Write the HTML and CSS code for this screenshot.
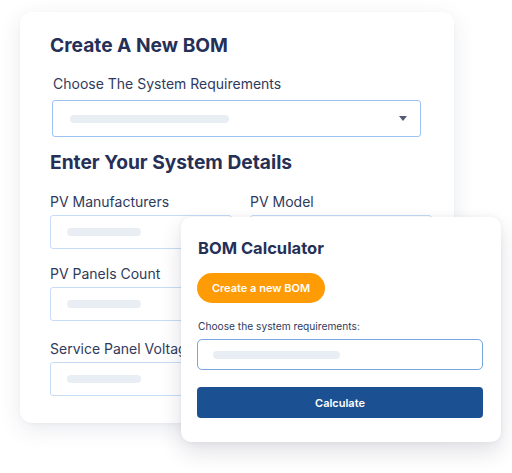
FILE: index.html
```html
<!DOCTYPE html>
<html>
<head>
<meta charset="utf-8">
<link rel="stylesheet" href="styles.css">
</head>
<body>
<div class="stage">
  <div class="card back">
    <h1 class="title">Create A New BOM</h1>
    <div class="label sel-label">Choose The System Requirements</div>
    <div class="select">
      <span class="ph ph-select"></span>
      <span class="arrow"></span>
    </div>
    <h2 class="title sub">Enter Your System Details</h2>
    <div class="grid">
      <div class="field">
        <div class="label">PV Manufacturers</div>
        <div class="input"><span class="ph"></span></div>
      </div>
      <div class="field">
        <div class="label">PV Model</div>
        <div class="input"><span class="ph"></span></div>
      </div>
      <div class="field">
        <div class="label">PV Panels Count</div>
        <div class="input"><span class="ph"></span></div>
      </div>
      <div class="field">
        <div class="label">Inverter Type</div>
        <div class="input"><span class="ph"></span></div>
      </div>
      <div class="field last">
        <div class="label">Service Panel Voltage</div>
        <div class="input"><span class="ph"></span></div>
      </div>
      <div class="field last">
        <div class="label">Main Breaker</div>
        <div class="input"><span class="ph"></span></div>
      </div>
    </div>
  </div>
  <div class="card front">
    <h3 class="ftitle">BOM Calculator</h3>
    <button class="btn-orange">Create a new BOM</button>
    <div class="flabel">Choose the system requirements:</div>
    <div class="finput"><span class="ph ph-front"></span></div>
    <button class="btn-blue">Calculate</button>
  </div>
</div>
</body>
</html>
```
FILE: styles.css
```css
* { box-sizing: border-box; margin: 0; padding: 0; }
html, body { background: #ffffff; }
body {
  font-family: Inter, "Noto Sans", "Liberation Sans", sans-serif;
  color: #2b3556;
  width: 512px;
  height: 473px;
  overflow: hidden;
}
.stage {
  position: relative;
  width: 512px;
  height: 473px;
  padding: 12px 0 0 20px;
}
.card {
  background: #ffffff;
  border-radius: 12px;
}
.back {
  width: 434px;
  height: 411px;
  padding: 21px 0 0 30px;
  box-shadow: 0 6px 22px rgba(40, 50, 90, 0.10), 0 1px 3px rgba(40, 50, 90, 0.04);
}
.title {
  font-size: 19.2px;
  line-height: 24px;
  font-weight: 700;
  color: #263056;
}
.label {
  font-size: 14px;
  line-height: 18px;
  font-weight: 400;
  color: #2f3a5c;
}
.sel-label {
  margin: 18px 0 0 3px;
}
.select {
  margin: 7px 0 0 2px;
  width: 369px;
  height: 37px;
  border: 1px solid #9cc3f3;
  border-radius: 3px;
  display: flex;
  align-items: center;
  justify-content: space-between;
  padding: 0 13px 0 17px;
}
.ph {
  display: block;
  height: 8px;
  width: 74px;
  border-radius: 4px;
  background: #e9edf4;
}
.ph-select { width: 159px; }
.arrow {
  width: 0;
  height: 0;
  border-left: 4.5px solid transparent;
  border-right: 4.5px solid transparent;
  border-top: 5px solid #545b78;
}
.sub { margin-top: 13px; }
.grid {
  margin-top: 19px;
  display: grid;
  grid-template-columns: 182px 182px;
  column-gap: 18px;
  row-gap: 16px;
}
.field.last { margin-top: 3px; }
.field .input {
  margin-top: 4px;
  height: 34px;
  border: 1px solid #c6dcf6;
  border-radius: 3px;
  display: flex;
  align-items: center;
  padding-left: 16px;
}
.front {
  position: absolute;
  left: 181px;
  top: 217px;
  width: 320px;
  height: 225px;
  border-radius: 10px;
  padding: 21px 17px 0 16px;
  display: flex;
  flex-direction: column;
  align-items: flex-start;
  box-shadow: 0 10px 22px rgba(40, 45, 80, 0.14), 0 0 6px rgba(40, 45, 80, 0.05);
}
.ftitle {
  font-size: 16.5px;
  line-height: 20px;
  font-weight: 700;
  color: #263056;
  margin-left: 1px;
}
.btn-orange {
  margin-top: 15px;
  width: 128px;
  height: 30px;
  border: none;
  border-radius: 15px;
  background: #ff9b05;
  color: #ffffff;
  font-family: Inter, "Noto Sans", "Liberation Sans", sans-serif;
  font-size: 11px;
  font-weight: 600;
}
.flabel {
  margin: 16px 0 0 1px;
  font-size: 10.2px;
  line-height: 14px;
  color: #2f3a5c;
}
.finput {
  margin-top: 6px;
  width: 286px;
  height: 31px;
  border: 1px solid #78a6e3;
  border-radius: 5px;
  display: flex;
  align-items: center;
  padding-left: 15px;
}
.ph-front { width: 127px; }
.btn-blue {
  margin-top: 17px;
  width: 286px;
  height: 31px;
  border: none;
  border-radius: 4px;
  background: #1b5192;
  color: #ffffff;
  font-family: Inter, "Noto Sans", "Liberation Sans", sans-serif;
  font-size: 11px;
  font-weight: 600;
}
```
